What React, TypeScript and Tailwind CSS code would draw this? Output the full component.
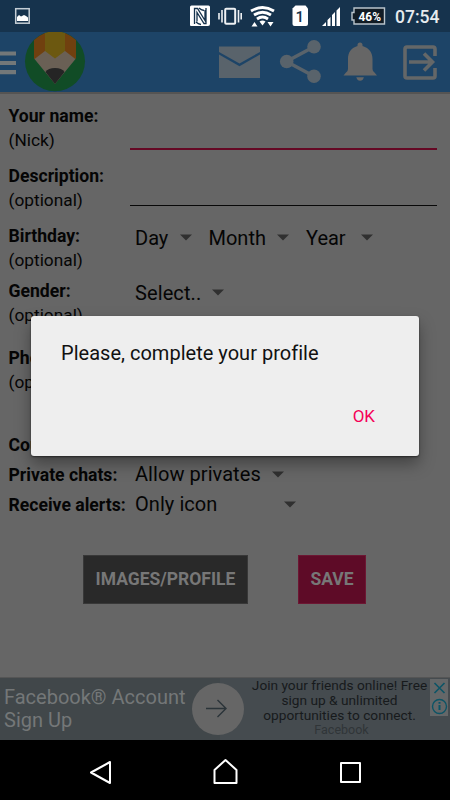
import React from "react";

function StatusBar() {
  return (
    <div className="flex h-8 bg-[#16334d] text-white">
      <svg width="450" height="32" viewBox="0 0 450 32" fill="none">
        <rect x="15.700" y="8.700" width="13.500" height="14.500" stroke="#c5ced6" strokeWidth="1.500" />
        <path d="M17 21v-4l2-2 2 1.500 3-1.500 2 1 2 1.500V21z" fill="#fff" />
        <path d="M191.500 5.500h17a1.500 1.500 0 0 1 1.500 1.500v17a2 2 0 0 1-2 2h-17a1 1 0 0 1-1-1V7a1.500 1.500 0 0 1 1.500-1.500z" fill="#fff" />
        <path d="M194.500 24V8.500h3l7.500 12V10M199 8q2 2 5 2.500M196 22q2 2 5 2.500M206 8v15.500h-2l-7-11v9" stroke="#16334d" strokeWidth="1.300" />
        <rect x="225.200" y="8.700" width="10" height="15" rx="1" stroke="#eef1f3" strokeWidth="2" />
        <path d="M222 10v12.500M238.500 10v12.500M219 13v6.500M241.200 13v6.500" stroke="#eef1f3" strokeWidth="1.600" />
        <path d="M251 11q11.500-7 23 0M254 15q8.500-5.500 17 0M257 19q5.500-4 11 0" stroke="#fff" strokeWidth="2.800" />
        <path d="M259.500 21.500q3-2 6 0l-3 4z" fill="#fff" />
        <path d="M251.500 26.500l3-4.500 3 4.500zM267.500 22h6l-3 4.500z" fill="#fff" />
        <path d="M295.500 5.500h10l2.500 3v15.500a2 2 0 0 1-2 2h-11.500a2 2 0 0 1-2-2V8.500z" fill="#fff" />
        <text x="295.500" y="21.500" fill="#16334d" className="font-['Roboto'] text-[15px] font-medium">1</text>
        <path d="M322 26l4-4v4zM327.500 26v-6l3-3v9zM332 26V15l3-3v14zM336.500 26V10.500l3.500-3.500v19z" fill="#fff" />
        <path d="M354 8h30.500v16H354v-4h-2v-7.500h2z" fill="#111c25" stroke="#b9c4cb" strokeWidth="1.400" />
        <text x="358.500" y="21" fill="#fff" textLength="22.500" lengthAdjust="spacingAndGlyphs" className="font-['Roboto'] text-[13.500px] font-bold">46%</text>
        <text x="395" y="22.500" fill="#e7ebee" textLength="44.500" lengthAdjust="spacingAndGlyphs" className="font-['Roboto'] text-[18.500px] font-medium">07:54</text>
      </svg>
    </div>
  );
}

function Header() {
  return (
    <header className="flex h-[62px] border-b-2 border-[#555453] bg-[#1d4467]">
      <svg width="450" height="60" viewBox="0 32 450 60" fill="none">
        <path d="M0 53.500h16M0 63h16M0 72.200h16" stroke="#737879" strokeWidth="4.200" />
        <circle cx="55" cy="61.300" r="30" fill="#114c26" />
        <path d="M34 40q4-4 11-7v25L34 59z" fill="#70400f" />
        <path d="M65 33q7 3 11 7v19l-11-4z" fill="#70400f" />
        <path d="M45 33q10-3.500 20 0v20L55 61l-10-6z" fill="#6c5810" />
        <path d="M34.500 59L45 51l10 7.500L65 51l10.500 8L55 84z" fill="#6a6055" />
        <path d="M45.500 72q2.500-4 9.500-4t9.500 4L55 84z" fill="#252525" />
        <path d="M219 46.500h41v5.500l-20.500 11.500L219 52z" fill="#59636b" />
        <path d="M219 54.500l20.500 11.700L260 54.500V78h-41z" fill="#59636b" />
        <path d="M313.500 47L286.500 61.500l27 14.500" stroke="#59636b" strokeWidth="3.500" />
        <circle cx="314" cy="46.700" r="6.800" fill="#59636b" />
        <circle cx="286.700" cy="61.500" r="6.800" fill="#59636b" />
        <circle cx="314" cy="76.300" r="6.800" fill="#59636b" />
        <path d="M357.500 46v-1a2.500 2.500 0 0 1 5 0v1c7 2 10 7 10 13v10q0 2 2 3.500l2.500 3h-33.500l2.500-3q2-1.500 2-3.500V59c0-6 2.500-11 9.500-13zM356.300 77.200h7.600q-1 3.600-3.800 3.600t-3.800-3.600z" fill="#666" />
        <path d="M435 56v-7a2 2 0 0 0-2-2h-26a2 2 0 0 0-2 2v27a2 2 0 0 0 2 2h26a2 2 0 0 0 2-2v-8" stroke="#646768" strokeWidth="3.600" />
        <path d="M409 62h23M424 53.500l8.500 8.500-8.500 8.500" stroke="#646768" strokeWidth="3.600" />
      </svg>
    </header>
  );
}

function Label({ title, note }: { title: string; note?: string }) {
  return (
    <div className="w-[121.500px] shrink-0 leading-6 whitespace-nowrap">
      <div className="text-[17.600px] font-bold">{title}</div>
      {note && <div className="text-[17.300px]">{note}</div>}
    </div>
  );
}

function Choice({ text, className }: { text: string; className: string }) {
  return (
    <div className={`flex items-center justify-between text-[20px] whitespace-nowrap ${className}`}>
      <span className="leading-7">{text}</span>
      <svg width="12" height="7" viewBox="0 0 12 7"><path d="M0 .5h12l-6 6z" fill="#303030" /></svg>
    </div>
  );
}

function Form() {
  return (
    <main className="flex h-[583px] flex-col bg-[#666] pt-[10px] pl-[8.500px] text-[#050505]">
      <div className="flex h-[60.400px]">
        <Label title="Your name:" note="(Nick)" />
        <div className="h-[46px] w-[307px] border-b-2 border-[#650824]" />
      </div>
      <div className="flex h-[59.600px]">
        <Label title="Description:" note="(optional)" />
        <div className="h-[41.600px] w-[307px] border-b border-[#080808]" />
      </div>
      <div className="flex h-[55px]">
        <Label title="Birthday:" note="(optional)" />
        <div className="flex pl-[5px]">
          <Choice text="Day" className="h-7 w-[57px]" />
          <Choice text="Month" className="ml-[16.500px] h-7 w-20" />
          <Choice text="Year" className="ml-[17.500px] h-7 w-[67px]" />
        </div>
      </div>
      <div className="flex h-[67px]">
        <Label title="Gender:" note="(optional)" />
        <Choice text="Select.." className="ml-[5px] h-7 w-[89px] tracking-[0.005em]" />
      </div>
      <div className="h-[87px]"><Label title="Phone:" note="(optional)" /></div>
      <div className="h-[30px]"><Label title="Country:" /></div>
      <div className="flex h-[30px]">
        <Label title="Private chats:" />
        <Choice text="Allow privates" className="ml-[5px] h-[23px] w-[149px] tracking-[0.003em]" />
      </div>
      <div className="flex h-[62px]">
        <Label title="Receive alerts:" />
        <Choice text="Only icon" className="ml-[5px] h-[23px] w-[161px] tracking-[0.003em]" />
      </div>
      <div className="flex gap-[50px] pl-[74.500px] text-[17.500px] font-bold whitespace-nowrap text-[#777]">
        <button className="h-[49px] w-[165px] border border-[#383838] bg-[#292929]">IMAGES/PROFILE</button>
        <button className="h-[49px] w-[68px] border border-[#6c1733] bg-[#5e0b27]">SAVE</button>
      </div>
    </main>
  );
}

function AdBanner() {
  return (
    <div className="flex h-[63px] border-t border-[#555] bg-[#454b4f] whitespace-nowrap">
      <div className="w-[192px] bg-[#41474a] pt-2 pl-1 text-[20px] leading-[22.500px] text-[#747778]">
        Facebook® Account<br />Sign Up
      </div>
      <svg width="52" height="62" viewBox="0 0 52 62" fill="none">
        <path d="M0 0h28v62H0z" fill="#41474a" />
        <circle cx="26" cy="31" r="26" fill="#666" />
        <path d="M14 30.500h20M25.500 22l8.500 8.500-8.500 8.500" stroke="#2b3439" strokeWidth="1.400" />
      </svg>
      <div className="w-[186px] pl-[5px] text-center text-[13.700px] leading-[15px] text-[#171a1c]">
        Join your friends online! Free<br />sign up &amp; unlimited<br />opportunities to connect.
        <div className="pl-1 text-[12.500px] leading-[14px] text-[#303538]">Facebook</div>
      </div>
      <svg width="20" height="38" viewBox="0 0 20 38" fill="none">
        <path d="M0 1h18v37H0z" fill="#656768" />
        <path d="M4.500 5l10 10M14.500 5l-10 10" stroke="#0c5466" strokeWidth="1.600" />
        <circle cx="9.500" cy="28.500" r="7" stroke="#0c5466" strokeWidth="1.400" />
        <path d="M9.500 27v5M9.500 24v1.800" stroke="#0c5466" strokeWidth="2" />
      </svg>
    </div>
  );
}

export default function App() {
  return (
    <div className="relative h-[800px] w-[450px] overflow-hidden bg-black font-['Roboto',sans-serif]">
      <StatusBar />
      <Header />
      <Form />
      <AdBanner />
      <nav className="flex h-[60px] bg-black">
        <svg width="450" height="60" viewBox="0 740 450 60" fill="none" stroke="#fff" strokeWidth="2" strokeLinejoin="round">
          <path d="M110 762v21l-19-10.500zM214.500 770l11-10 11 10v13h-22zM341 763h19v19h-19z" />
        </svg>
      </nav>
      <div role="dialog" className="absolute top-[316px] left-[31px] flex h-[140px] w-[388px] flex-col rounded-[3px] bg-[#eee] shadow-[0_8px_16px_rgba(0,0,0,0.35),0_1px_2px_rgba(0,0,0,0.5)]">
        <p className="pt-[23px] pl-[30px] text-[20px] leading-7 tracking-[0.001em] text-[#111]">Please, complete your profile</p>
        <button className="mt-[37px] mr-[44px] self-end text-[17px] leading-6 text-[#f50057]">OK</button>
      </div>
    </div>
  );
}
